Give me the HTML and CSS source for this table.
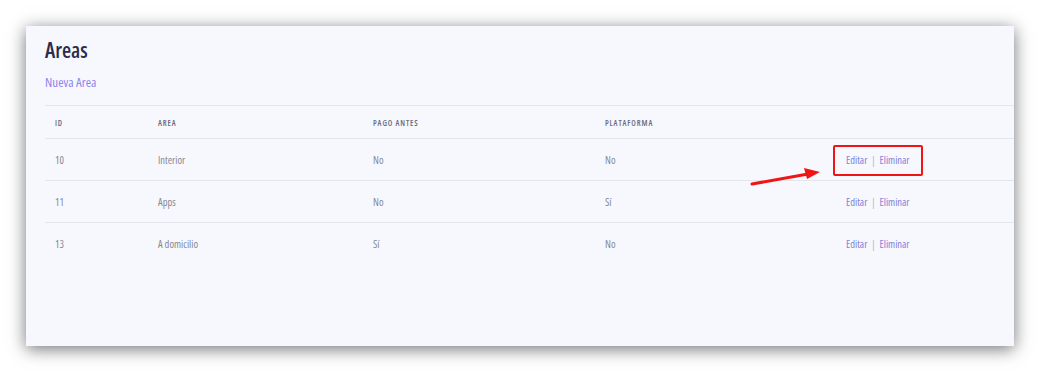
FILE: index.html
```html
<!DOCTYPE html>
<html lang="es">
<head>
<meta charset="utf-8">
<title>Areas</title>
<link rel="stylesheet" href="styles.css">
</head>
<body>
<div class="stage">
  <section class="panel">
    <h1 class="title">Areas</h1>
    <a class="new-link" href="#">Nueva Area</a>
    <table class="grid">
      <colgroup>
        <col class="c-id"><col class="c-area"><col class="c-pago"><col class="c-plat"><col class="c-act">
      </colgroup>
      <thead>
        <tr><th>ID</th><th>Area</th><th>Pago antes</th><th>Plataforma</th><th></th></tr>
      </thead>
      <tbody>
        <tr><td>10</td><td>Interior</td><td>No</td><td>No</td><td class="act"><a href="#">Editar</a><span class="sep">|</span><a href="#">Eliminar</a></td></tr>
        <tr><td>11</td><td>Apps</td><td>No</td><td>Sí</td><td class="act"><a href="#">Editar</a><span class="sep">|</span><a href="#">Eliminar</a></td></tr>
        <tr><td>13</td><td>A domicilio</td><td>Sí</td><td>No</td><td class="act"><a href="#">Editar</a><span class="sep">|</span><a href="#">Eliminar</a></td></tr>
      </tbody>
    </table>
    <div class="mark-box"></div>
    <svg class="mark-arrow" width="80" height="24" viewBox="0 0 80 24">
      <line x1="2" y1="20" x2="58" y2="10" stroke="#f01414" stroke-width="3" stroke-linecap="round"/>
      <polygon points="70,8 54,4 57,15" fill="#f01414"/>
    </svg>
  </section>
</div>
</body>
</html>
```
FILE: styles.css
```css
html, body {
  margin: 0;
  padding: 0;
  background: #ffffff;
}
body {
  font-family: "Open Sans", "Noto Sans", sans-serif;
  font-stretch: 82%;
}
.stage {
  padding: 26px 25px 25px 26px;
}
.panel {
  position: relative;
  box-sizing: border-box;
  width: 988px;
  height: 320px;
  background: #f7f8fd;
  box-shadow: 0 3px 16px rgba(0, 0, 0, 0.55);
  padding: 11px 0 0 19px;
  display: flex;
  flex-direction: column;
  align-items: flex-start;
}
.title {
  margin: 0;
  font-size: 21px;
  line-height: 26px;
  font-weight: 600;
  color: #2b2d4b;
}
.new-link {
  margin-top: 10px;
  font-size: 13px;
  line-height: 18px;
  font-weight: 400;
  color: #8e84ee;
  text-decoration: none;
}
.grid {
  margin-top: 14px;
  width: 969px;
  border-collapse: collapse;
  table-layout: fixed;
}
.c-id { width: 103px; }
.c-area { width: 215px; }
.c-pago { width: 232px; }
.c-plat { width: 241px; }
.grid th {
  text-align: left;
  font-size: 8px;
  font-weight: 600;
  letter-spacing: 0.9px;
  text-transform: uppercase;
  color: #666a7c;
  height: 32px;
  padding: 0 0 0 10px;
  border-top: 1px solid #e4e6ee;
  border-bottom: 1px solid #e4e6ee;
}
.grid td {
  font-size: 10.5px;
  font-weight: 400;
  color: #858895;
  height: 41px;
  padding: 0 0 0 10px;
  border-bottom: 1px solid #e4e6ee;
}
.grid tbody tr:last-child td {
  border-bottom: none;
}
.act a {
  color: #8080da;
  text-decoration: none;
}
.act .sep {
  color: #aeb2cf;
  margin: 0 4px;
}
.mark-box {
  position: absolute;
  left: 807px;
  top: 119px;
  width: 86px;
  height: 27px;
  border: 2.5px solid #f01414;
  border-radius: 2px;
}
.mark-arrow {
  position: absolute;
  left: 724px;
  top: 138px;
}
```
